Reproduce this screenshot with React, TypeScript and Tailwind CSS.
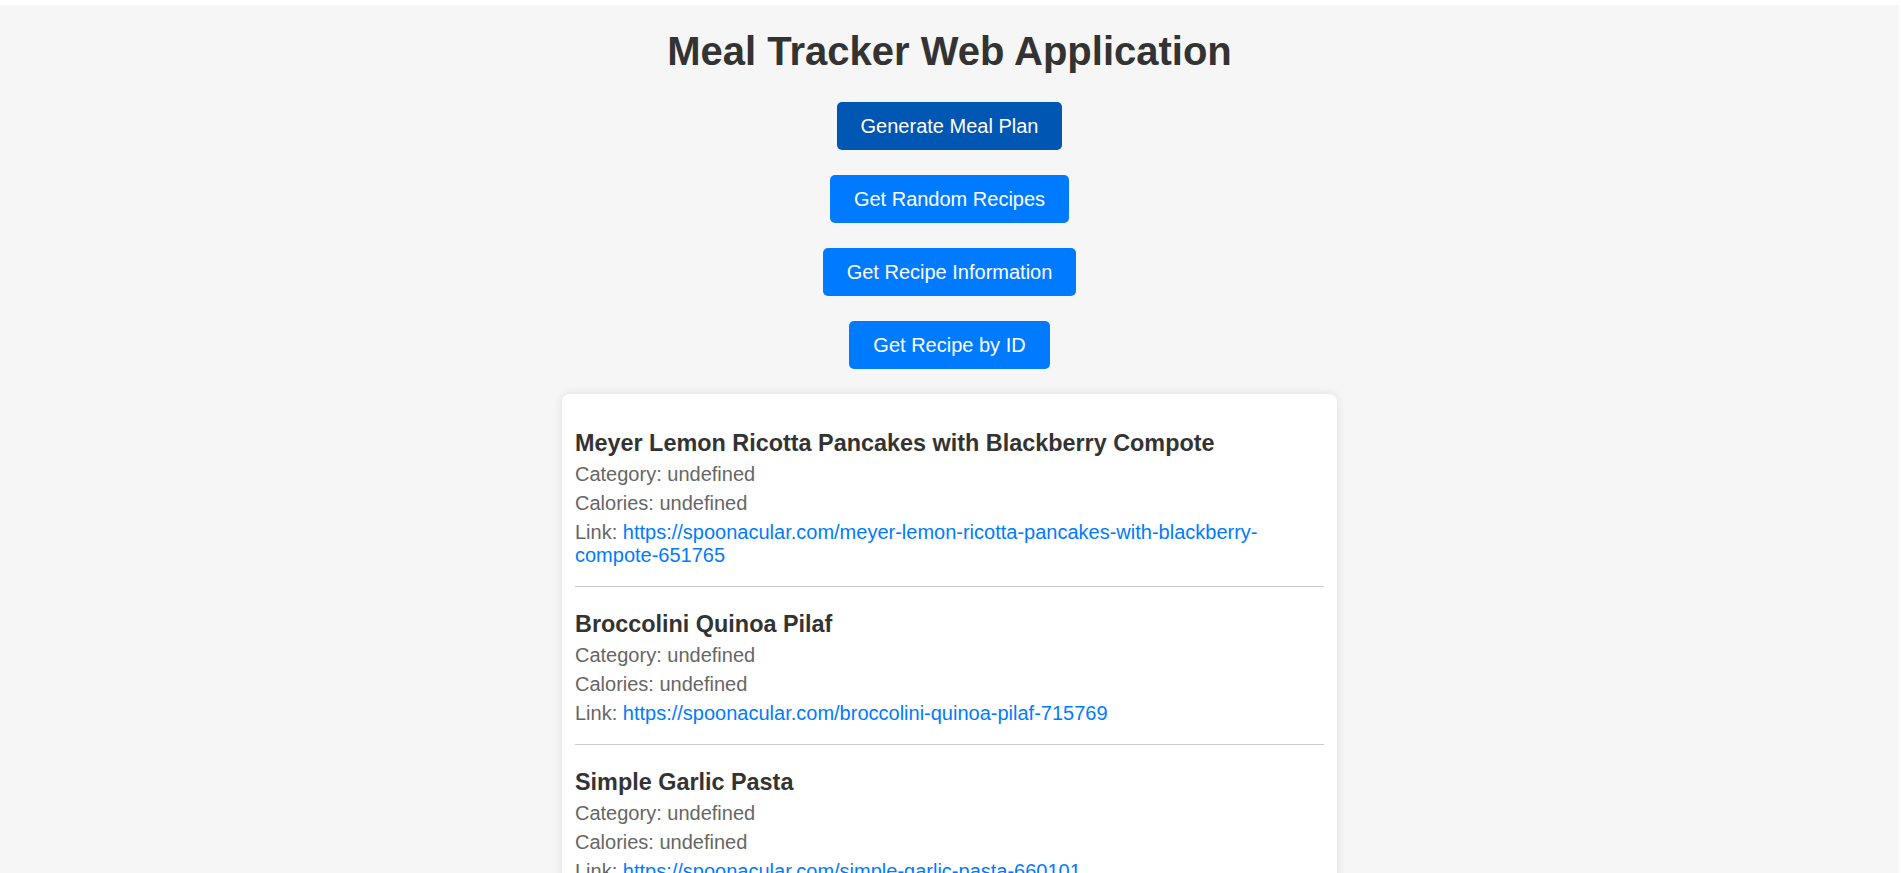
import React from "react";

type Meal = {
  title: string;
  category?: string;
  calories?: number;
  link: string;
};

const meals: Meal[] = [
  {
    title: "Meyer Lemon Ricotta Pancakes with Blackberry Compote",
    link: "https://spoonacular.com/meyer-lemon-ricotta-pancakes-with-blackberry-compote-651765",
  },
  {
    title: "Broccolini Quinoa Pilaf",
    link: "https://spoonacular.com/broccolini-quinoa-pilaf-715769",
  },
  {
    title: "Simple Garlic Pasta",
    link: "https://spoonacular.com/simple-garlic-pasta-660101",
  },
];

const buttons = [
  "Generate Meal Plan",
  "Get Random Recipes",
  "Get Recipe Information",
  "Get Recipe by ID",
];

export default function App() {
  return (
    <div className="min-h-screen bg-white pt-[5px] pr-[2px] font-['Liberation_Sans',Arial,sans-serif] text-[20px]">
      <main className="min-h-[868px] bg-[#f6f6f6] flex flex-col items-center pt-[23px]">
        <h1 className="text-[40px] leading-[46px] font-bold text-[#333]">
          Meal Tracker Web Application
        </h1>

        <div className="flex flex-col items-center gap-[25px] mt-[28px]">
          {buttons.map((label, i) => (
            <button
              key={label}
              className={`h-12 px-6 rounded-[5px] text-white text-[20px] leading-[23px] ${
                i === 0 ? "bg-[#0056b3]" : "bg-[#007bff]"
              }`}
            >
              {label}
            </button>
          ))}
        </div>

        <ul className="w-[775px] mt-[25px] bg-white rounded-lg shadow-[0_0_10px_rgba(0,0,0,0.1)] px-[13px] pt-[12px] pb-[12px]">
          {meals.map((meal) => (
            <li
              key={meal.title}
              className="pt-[24px] pb-[19px] border-b border-[#ccc]"
            >
              <h3 className="text-[23.4px] leading-[27px] font-bold text-[#333]">
                {meal.title}
              </h3>
              <p className="mt-[6px] leading-[23px] text-[#666]">
                Category: {String(meal.category)}
              </p>
              <p className="mt-[6px] leading-[23px] text-[#666]">
                Calories: {String(meal.calories)}
              </p>
              <p className="mt-[6px] leading-[23px] text-[#666]">
                Link:{" "}
                <a href={meal.link} className="text-[#007bff]">
                  {meal.link}
                </a>
              </p>
            </li>
          ))}
        </ul>
      </main>
    </div>
  );
}
